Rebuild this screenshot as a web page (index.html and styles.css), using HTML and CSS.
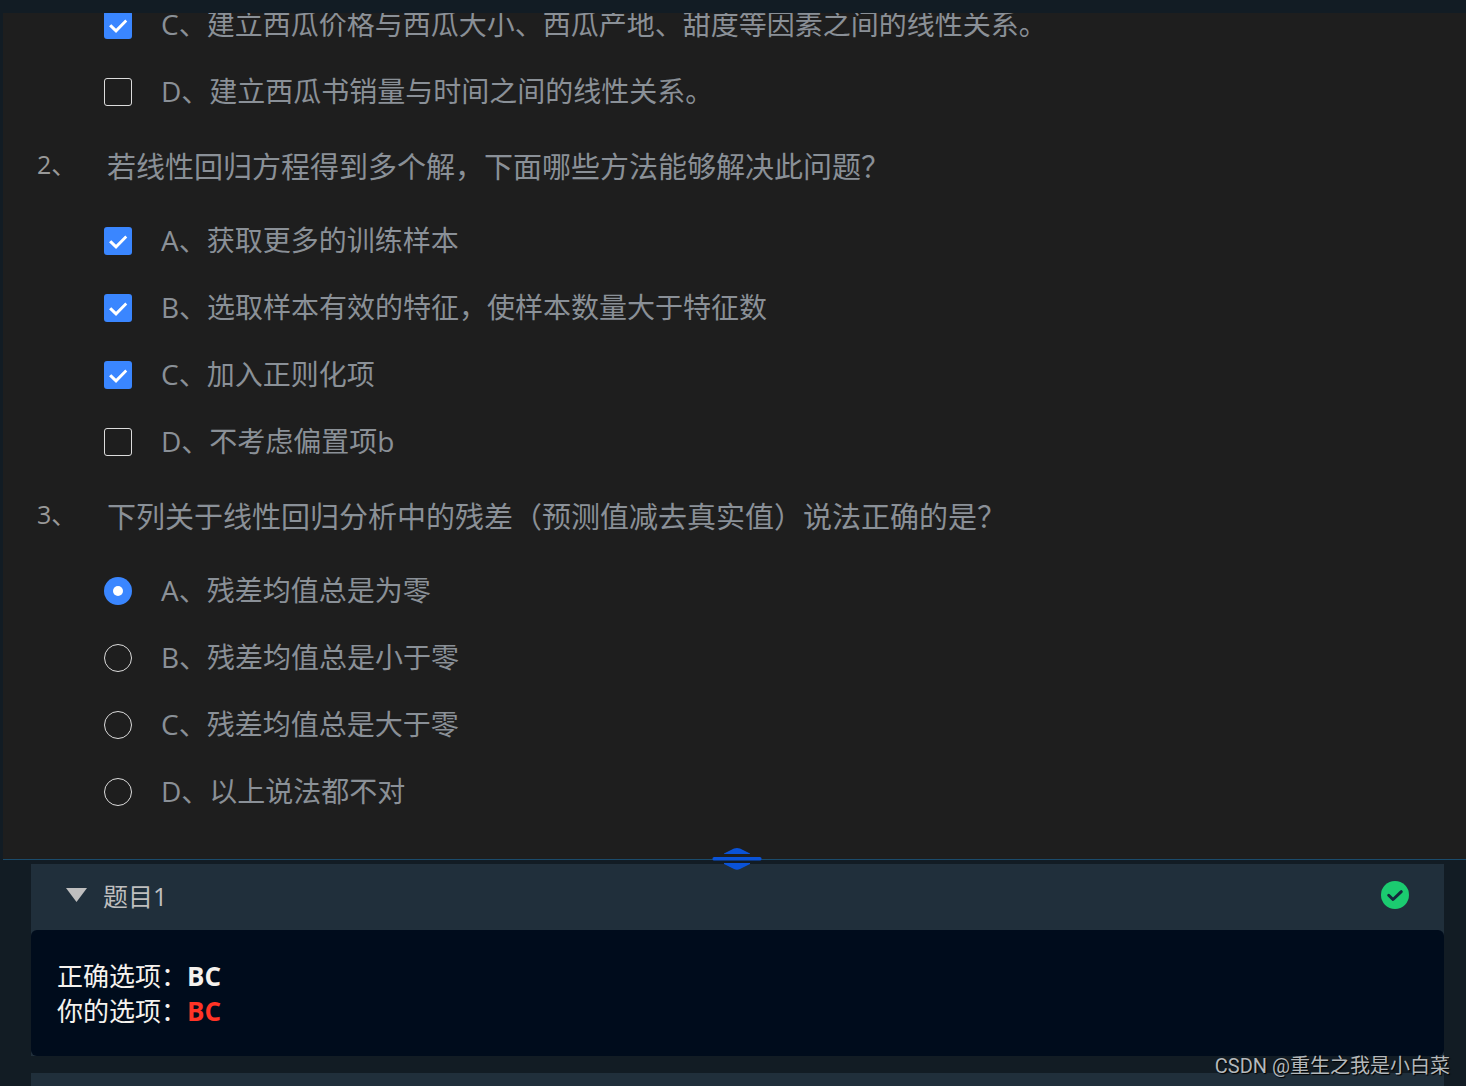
FILE: index.html
```
<!DOCTYPE html>
<html lang="zh-CN">
	<head>
		<meta charset="UTF-8">
		<title>线性回归 - 选择题</title>
		<link rel="stylesheet" href="styles.css">
	</head>
	<body>
		<main class="quiz">
			<ol class="questions">
				<li class="question">
					<ul class="options">
						<li><label class="option"><input type="checkbox" name="q1" checked><span>C、建立西瓜价格与西瓜大小、西瓜产地、甜度等因素之间的线性关系。</span></label></li>
						<li><label class="option"><input type="checkbox" name="q1"><span>D、建立西瓜书销量与时间之间的线性关系。</span></label></li>
					</ul>
				</li>
				<li class="question">
					<div class="title"><span class="num">2、</span><p>若线性回归方程得到多个解，下面哪些方法能够解决此问题？</p></div>
					<ul class="options">
						<li><label class="option"><input type="checkbox" name="q2" checked><span>A、获取更多的训练样本</span></label></li>
						<li><label class="option"><input type="checkbox" name="q2" checked><span>B、选取样本有效的特征，使样本数量大于特征数</span></label></li>
						<li><label class="option"><input type="checkbox" name="q2" checked><span>C、加入正则化项</span></label></li>
						<li><label class="option"><input type="checkbox" name="q2"><span>D、不考虑偏置项b</span></label></li>
					</ul>
				</li>
				<li class="question">
					<div class="title"><span class="num">3、</span><p>下列关于线性回归分析中的残差（预测值减去真实值）说法正确的是？</p></div>
					<ul class="options">
						<li><label class="option"><input type="radio" name="q3" checked><span>A、残差均值总是为零</span></label></li>
						<li><label class="option"><input type="radio" name="q3"><span>B、残差均值总是小于零</span></label></li>
						<li><label class="option"><input type="radio" name="q3"><span>C、残差均值总是大于零</span></label></li>
						<li><label class="option"><input type="radio" name="q3"><span>D、以上说法都不对</span></label></li>
					</ul>
				</li>
			</ol>
		</main>

		<section class="results">
			<!-- 拖动条 -->
			<svg class="handle" width="50" height="24" viewBox="0 0 50 24" aria-hidden="true">
				<path d="M12 6.5L22 1.5Q25 0.3 28 1.5L38 6.5V7H12z"/>
				<rect x="0.5" y="10" width="49" height="3.6" rx="1.6"/>
				<path d="M12 16H38V17L28 22Q25 23.5 22 22L12 17z"/>
			</svg>
			<article class="card">
				<button type="button" class="card-head" aria-expanded="true">
					<svg class="arrow" width="21" height="14" viewBox="0 0 21 14" aria-hidden="true"><path d="M0 0H21L10.5 14z"/></svg>
					<span>题目1</span>
					<svg class="ok" width="28" height="28" viewBox="0 0 28 28" aria-hidden="true">
						<circle cx="14" cy="14" r="14"/>
						<path d="M7.7 14.3L12 18.5L20.3 10.7"/>
					</svg>
				</button>
				<div class="answer">
					<p>正确选项：<b>BC</b></p>
					<p>你的选项：<b class="mine">BC</b></p>
				</div>
			</article>
			<article class="card">
				<button type="button" class="card-head" aria-label="展开"></button>
			</article>
		</section>
		<div class="watermark">CSDN @重生之我是小白菜</div>
	</body>
</html>
```
FILE: styles.css
```
*{margin: 0;padding: 0;box-sizing: border-box;}
li{list-style: none;}
body{height: 100vh;padding: 13px 0 0 3px;display: flex;flex-direction: column;overflow: hidden;position: relative;background: #121c24;font-family: "Open Sans","Noto Sans CJK SC",sans-serif;}

/* 题目区 */
.quiz{flex: 1;min-height: 0;padding: 0 34px 34px;display: flex;flex-direction: column;justify-content: flex-end;overflow: hidden;background: #1e1e1e;color: #8a9097;}
.title{display: flex;align-items: center;height: 82px;padding-bottom: 3px;font-size: 29px;}
.title .num{width: 70px;padding-bottom: 3px;font-size: 25px;color: #999;}
.options{padding-left: 67px;}
.option{display: flex;align-items: center;gap: 29px;height: 67px;font-size: 28px;cursor: pointer;}
.option span{padding-bottom: 3px;}
.option input{appearance: none;flex: none;width: 28px;height: 28px;border: 1px solid #dcdcdc;border-radius: 3px;display: grid;place-items: center;}
.option input[type=radio]{border-radius: 50%;}
.option input:checked{border: 0;background: #3a86ff;}
.option input:checked::after{content: "";background: #fff;}
.option input[type=checkbox]:checked::after{width: 28px;height: 28px;clip-path: polygon(18% 56%, 26% 49%, 43% 65%, 76% 32%, 83% 39%, 43% 80%);}
.option input[type=radio]:checked::after{width: 10px;height: 10px;border-radius: 50%;}

/* 结果区 */
.results{flex: 0 0 227px;min-height: 0;padding: 4px 22px 0 28px;display: flex;flex-direction: column;gap: 17px;position: relative;border-top: 1px solid #1b4b6b;}
.handle{position: absolute;top: -13px;left: 50%;margin-left: -23px;fill: #0a53d8;}
.card{flex: none;background: #202f3b;}
.card-head{width: 100%;height: 66px;padding: 0 35px 4px;display: flex;align-items: center;border: 0;background: none;color: #bfbfbf;font-family: inherit;font-size: 25px;cursor: pointer;}
.arrow{margin-right: 16px;fill: #bfbfbf;}
.ok{margin-left: auto;}
.ok circle{fill: #1bcb70;}
.ok path{fill: none;stroke: #14283c;stroke-width: 3;stroke-linecap: round;stroke-linejoin: round;}
.answer{padding: 29px 26px 27px;border-radius: 6px;background: #000c1c;color: #f5f2ee;font-size: 26px;line-height: 35px;}
.answer .mine{color: #ff3426;}

.watermark{position: absolute;right: 16px;bottom: 7px;color: #b4b8bb;font-family: Roboto,"Noto Sans CJK SC",sans-serif;font-size: 20px;line-height: 26px;text-shadow: 1px 1px 1px #000;}
```
